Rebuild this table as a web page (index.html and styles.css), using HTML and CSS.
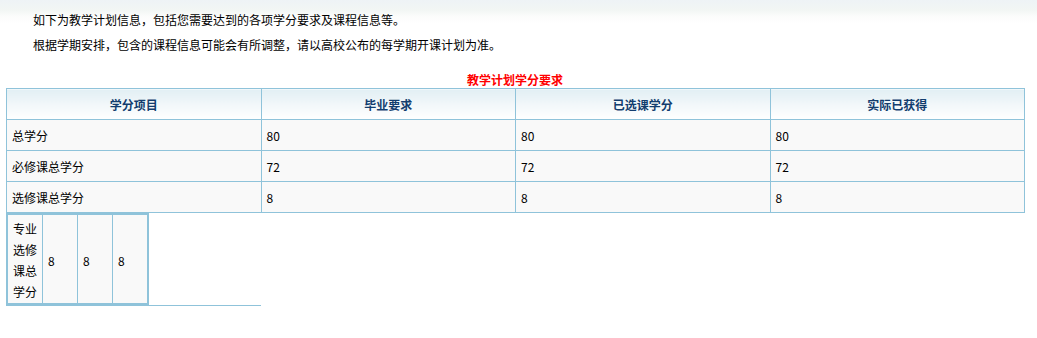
FILE: index.html
```html
<!DOCTYPE html>
<html lang="zh-CN">
<head>
<meta charset="utf-8">
<title>教学计划</title>
<link rel="stylesheet" href="styles.css">
</head>
<body>
<div class="page">
  <div class="intro">
    <p>如下为教学计划信息，包括您需要达到的各项学分要求及课程信息等。</p>
    <p>根据学期安排，包含的课程信息可能会有所调整，请以高校公布的每学期开课计划为准。</p>
  </div>
  <div class="caption">教学计划学分要求</div>
  <table class="credits">
    <thead>
      <tr><th>学分项目</th><th>毕业要求</th><th>已选课学分</th><th>实际已获得</th></tr>
    </thead>
    <tbody>
      <tr><td>总学分</td><td>80</td><td>80</td><td>80</td></tr>
      <tr><td>必修课总学分</td><td>72</td><td>72</td><td>72</td></tr>
      <tr><td>选修课总学分</td><td>8</td><td>8</td><td>8</td></tr>
    </tbody>
  </table>
  <div class="extra">
    <table class="mini">
      <tr><td class="label">专业选修课总学分</td><td>8</td><td>8</td><td>8</td></tr>
    </table>
  </div>
</div>
</body>
</html>
```
FILE: styles.css
```css
html, body {
  margin: 0;
  padding: 0;
}
body {
  font-family: "Noto Sans CJK SC", "Liberation Sans", sans-serif;
  font-size: 12px;
  color: #000;
  background: linear-gradient(to bottom, #eef3f6 0px, #f2f6f4 10px, #fbfcfb 16px, #ffffff 24px) no-repeat;
  background-color: #fff;
  width: 1037px;
  height: 338px;
  overflow: hidden;
}
.page {
  padding: 0 13px 0 6px;
}
.intro {
  padding: 11px 0 0 27px;
}
.intro p {
  margin: 0;
  height: 25px;
  line-height: 17px;
}
.caption {
  margin-top: 11px;
  text-align: center;
  color: #ff0000;
  font-weight: bold;
  line-height: 16px;
  height: 16px;
}
.credits {
  width: 1019px;
  border-collapse: collapse;
  table-layout: fixed;
}
.credits th, .credits td {
  border: 1px solid #8fc3da;
  height: 31px;
  padding: 0 5px;
  box-sizing: border-box;
}
.credits th {
  background: linear-gradient(to bottom, #e2eff4 0%, #f3f8fa 55%, #ffffff 100%);
  color: #123d6e;
  font-weight: bold;
  text-align: center;
}
.credits td {
  background: #f9f9f9;
  text-align: left;
}
.extra {
  width: 255px;
  border-bottom: 1px solid #8fc3da;
}
.mini {
  border: 2px solid #8fc3da;
  border-collapse: collapse;
  background: #f9f9f9;
}
.mini td {
  border: 1px solid #8fc3da;
  padding: 3px 5px 1px;
  line-height: 21px;
  width: 24px;
  vertical-align: middle;
}
.mini td.label {
  width: 24px;
  word-break: break-all;
}
```
